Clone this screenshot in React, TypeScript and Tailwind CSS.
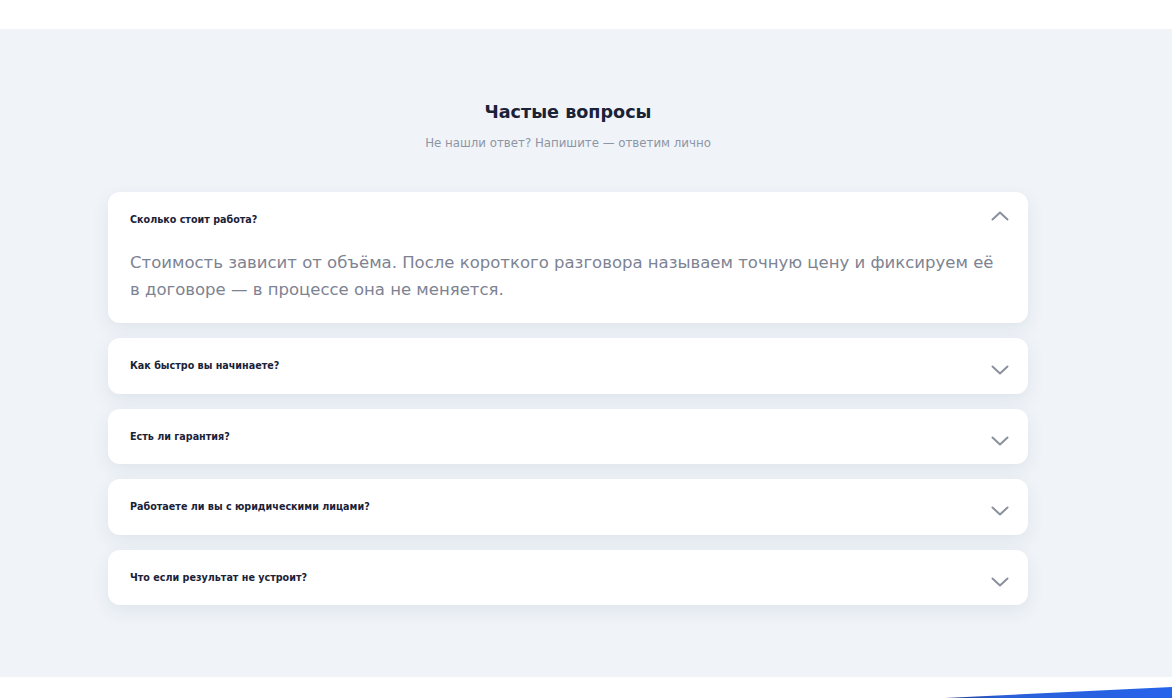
import React, { useState } from 'react';

type Faq = { q: string; a: string };

const faqs: Faq[] = [
  {
    q: 'Сколько стоит работа?',
    a: 'Стоимость зависит от объёма. После короткого разговора называем точную цену и фиксируем её в договоре — в процессе она не меняется.',
  },
  { q: 'Как быстро вы начинаете?', a: 'Обычно в течение одного-двух рабочих дней после согласования задачи.' },
  { q: 'Есть ли гарантия?', a: 'Да, на все работы действует гарантия, прописанная в договоре.' },
  { q: 'Работаете ли вы с юридическими лицами?', a: 'Да, работаем по договору с безналичной оплатой и закрывающими документами.' },
  { q: 'Что если результат не устроит?', a: 'Доработаем бесплатно, пока результат не будет соответствовать договорённостям.' },
];

const Chevron: React.FC<{ open: boolean }> = ({ open }) => (
  <svg
    width="18"
    height="10"
    viewBox="0 0 18 10"
    fill="none"
    className={open ? 'rotate-180' : ''}
  >
    <path d="M1.5 1.5L9 8.5L16.5 1.5" stroke="#8a909c" strokeWidth="2" strokeLinecap="round" strokeLinejoin="round" />
  </svg>
);

const FaqItem: React.FC<{ item: Faq; open: boolean; onToggle: () => void }> = ({ item, open, onToggle }) => (
  <div className="rounded-xl bg-white shadow-[0_6px_18px_rgba(30,45,80,0.08)]">
    <button
      type="button"
      onClick={onToggle}
      className={`flex w-full items-start justify-between pl-[22px] pr-[19px] pt-[22px] text-left ${open ? '' : 'h-[55.5px]'}`}
    >
      <span className="text-[9.6px] font-bold leading-[12px] text-[#1a2238]">{item.q}</span>
      <span className={open ? 'mt-[-3px]' : 'mt-[5px]'}>
        <Chevron open={open} />
      </span>
    </button>
    {open && (
      <p className="px-[22px] pt-[23px] pb-[20px] text-[16.5px] leading-[27px] text-[#7d8392]">{item.a}</p>
    )}
  </div>
);

export default function App() {
  const [openIdx, setOpenIdx] = useState<number | null>(0);

  return (
    <div className="min-h-[698px] bg-white" style={{ fontFamily: '"DejaVu Sans", "Noto Sans", sans-serif' }}>
      <div className="h-[29px] bg-white" />
      <section className="h-[648px] bg-[#f0f4f9]">
        <div className="w-[1136px] pt-[70px]">
          <div className="mx-auto w-[920px]">
            <h2 className="text-center text-[17.6px] font-bold leading-[26px] text-[#1a2238]">Частые вопросы</h2>
            <p className="mt-[11px] text-center text-[11.8px] leading-[14px] text-[#8d95a5]">
              Не нашли ответ? Напишите — ответим лично
            </p>
            <div className="mt-[42px] flex flex-col gap-[15px]">
              {faqs.map((f, i) => (
                <FaqItem
                  key={f.q}
                  item={f}
                  open={openIdx === i}
                  onToggle={() => setOpenIdx(openIdx === i ? null : i)}
                />
              ))}
            </div>
          </div>
        </div>
      </section>
      <div className="relative h-[21px] overflow-hidden bg-white">
        <svg className="absolute bottom-0 right-0" width="240" height="12" viewBox="0 0 240 12" preserveAspectRatio="none">
          <defs>
            <linearGradient id="wedge" x1="0" y1="0" x2="1" y2="0">
              <stop offset="0" stopColor="#1e3a8a" />
              <stop offset="0.25" stopColor="#2a5fd8" />
              <stop offset="1" stopColor="#2563eb" />
            </linearGradient>
          </defs>
          <polygon points="13,12 240,1 240,12" fill="url(#wedge)" />
        </svg>
      </div>
    </div>
  );
}
